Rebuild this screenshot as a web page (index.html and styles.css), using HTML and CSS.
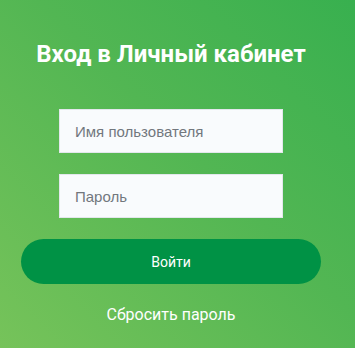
FILE: index.html
```html
<html>
    <head>
        <meta charset="UTF-8">
        <link rel="stylesheet" href="styles.css">
    </head>

    <body>
        <div class="login">
            <h1 class="login-title">Вход в Личный кабинет</h1>

            <form class="login-form">
                <input class="login-input" type="text" placeholder="Имя пользователя">
                <input class="login-input" type="password" placeholder="Пароль">
                <button class="login-button" type="button">Войти</button>
            </form>

            <a class="login-reset" href="#">Сбросить пароль</a>
        </div>
    </body>
</html>
```

FILE: styles.css
```css
html, body {
    margin: 0;
    height: 100%;
}

body {
    background: linear-gradient(45deg, #76c35a 0%, #52b653 55%, #38b04f 100%);
    font-family: Roboto, "Liberation Sans", sans-serif;
}

.login {
    width: 342px;
    display: flex;
    flex-direction: column;
    align-items: center;
    padding-top: 38px;
}

.login-title {
    margin: 0;
    color: #fff;
    font-size: 24px;
    font-weight: bold;
    line-height: 32px;
}

.login-form {
    margin: 39px 0 0;
    display: flex;
    flex-direction: column;
    align-items: center;
    width: 100%;
}

.login-input {
    box-sizing: border-box;
    width: 224px;
    height: 44px;
    margin-bottom: 21px;
    padding: 0 15px;
    border: 1px solid #e3e7ec;
    background: #f9fbfd;
    font-family: "Liberation Sans", Arial, sans-serif;
    font-size: 15px;
    color: #333;
    outline: none;
}

.login-input::placeholder {
    color: #72777d;
}

.login-button {
    width: 300px;
    height: 45px;
    border: none;
    border-radius: 23px;
    background: #009245;
    color: #fff;
    font-family: inherit;
    font-size: 14px;
    cursor: pointer;
}

.login-reset {
    margin-top: 21px;
    color: #fff;
    font-size: 16px;
    line-height: 20px;
    text-decoration: none;
}
```
